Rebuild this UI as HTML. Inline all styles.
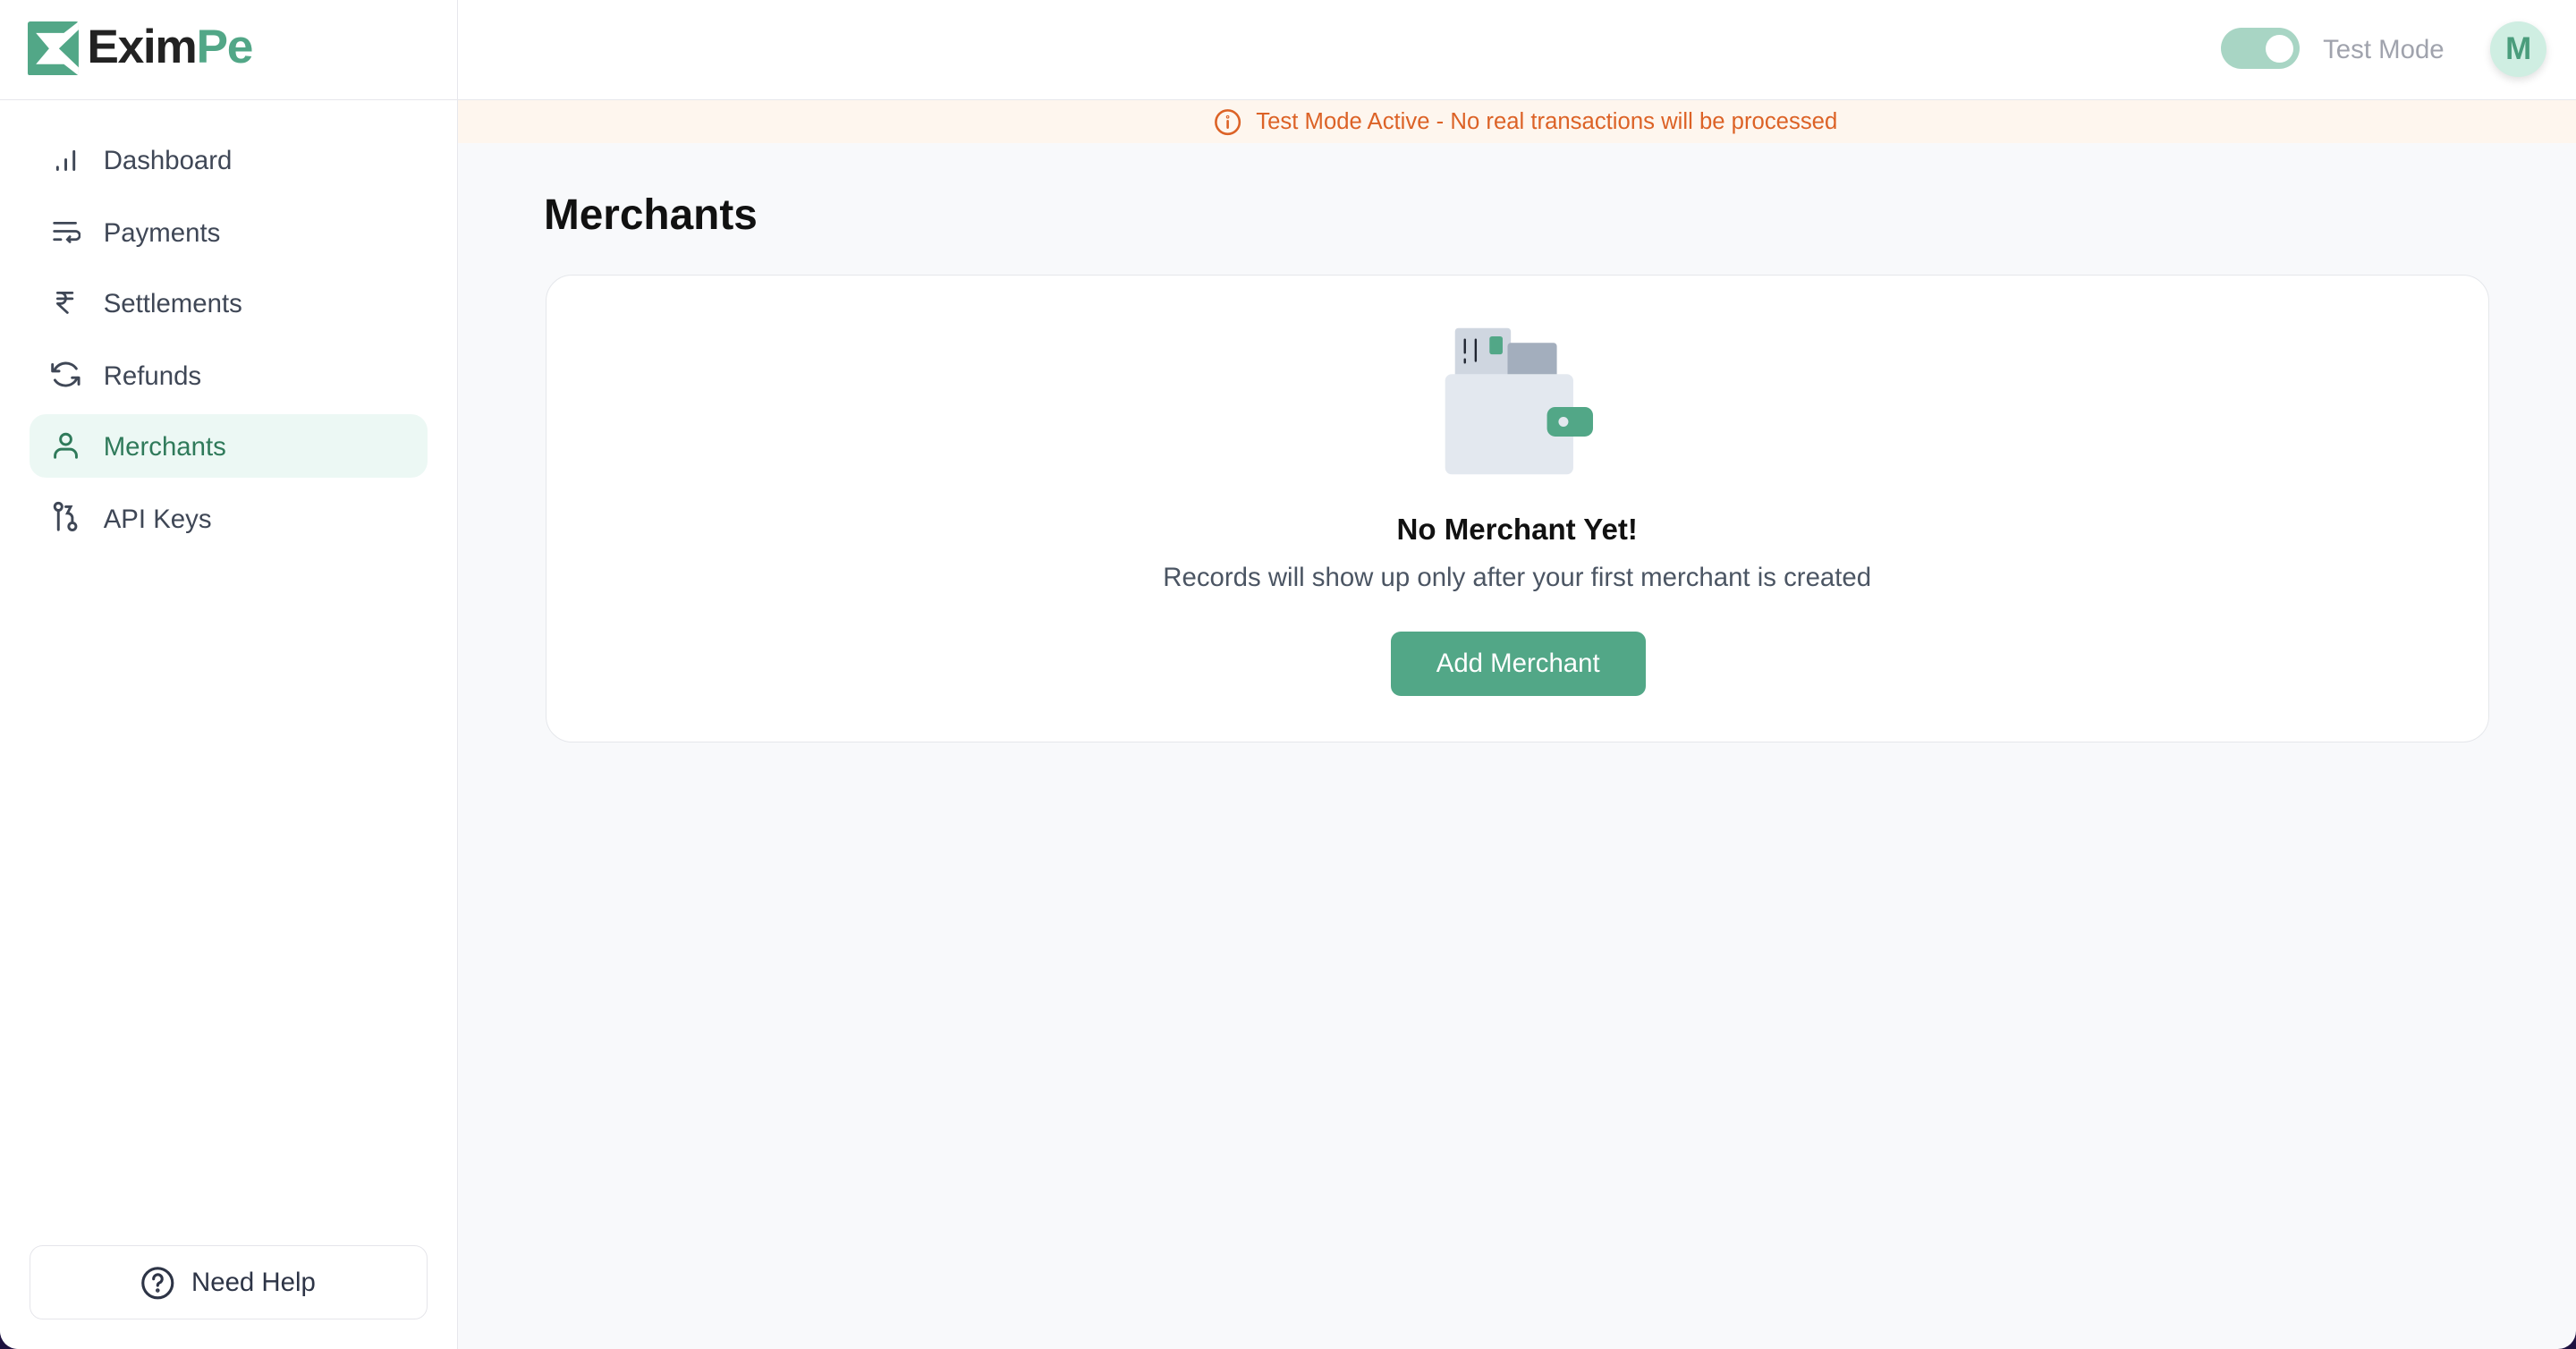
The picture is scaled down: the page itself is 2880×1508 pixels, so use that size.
<!DOCTYPE html>
<html><head><meta charset="utf-8"><style>
html{zoom:1.836735;background:#1e1240}
*{box-sizing:border-box;margin:0;padding:0}
body{width:1568px;height:821px;overflow:hidden;font-family:"Liberation Sans",sans-serif;background:#1e1240}
.app{position:absolute;left:0;top:0;width:1568px;height:821px;background:#f8f9fb;border-radius:0 0 11px 11px;overflow:hidden}
.side{position:absolute;left:0;top:0;width:279px;height:821px;background:#fff;border-right:1px solid #e7e7ec}
.logo{position:absolute;left:0;top:0;width:278px;height:61px;border-bottom:1px solid #e7e7ec}
.logo .t{position:absolute;left:53px;top:12px;font-size:29px;font-weight:bold;letter-spacing:-0.7px;color:#222}
.logo .t span{color:#52a787}
.nav{position:absolute;left:18px;width:242px;height:39px;border-radius:10px;color:#3f4756;font-size:16px}
.nav svg{position:absolute;left:13px;top:10px}
.nav .l{position:absolute;left:45px;top:11px}
.nav.a{background:#ecf8f4;color:#2f7a5a}
.help{position:absolute;left:18px;top:758px;width:242px;height:45px;border:1px solid #e5e5ea;border-radius:8px;font-size:16px;color:#2d3446}
.top{position:absolute;left:279px;top:0;right:0;height:61px;background:#fff;border-bottom:1px solid #e7e7ec}
.banner{position:absolute;left:279px;top:61px;right:0;height:26px;background:#fef6ee;color:#dc6226;font-size:14px;text-align:center}
h1{position:absolute;left:331px;top:116px;font-size:26px;font-weight:bold;color:#111}
.card{position:absolute;left:332px;top:167px;width:1183px;height:285px;background:#fff;border:1px solid #e5e7eb;border-radius:16px}
</style></head><body><div class="app">
<div class="side">
 <div class="logo">
  <svg style="position:absolute;left:17px;top:13px" width="31" height="33" viewBox="0 0 31 33"><rect width="31" height="33" rx="1.5" fill="#52a787"/><path d="M5 7H22L31 0V5L19 16.5L31 28V33L22 26H5L13 16.5Z" fill="#fff"/></svg>
  <div class="t">Exim<span>Pe</span></div>
 </div>
 <div class="nav" style="top:78px"><svg width="18" height="18" viewBox="0 0 18 18" fill="none" stroke="#3f4756" stroke-width="1.6" stroke-linecap="round"><path d="M4 15v-1.5M9 15V9M14 15V4"/></svg><span class="l">Dashboard</span></div>
 <div class="nav" style="top:122px"><svg width="18" height="18" viewBox="0 0 18 18" fill="none" stroke="#3f4756" stroke-width="1.5" stroke-linecap="round"><path d="M2 4h13M2 9h13a2.5 2.5 0 0 1 0 5H10M11.5 12.3L10 14l1.5 1.5M2 14h4"/></svg><span class="l">Payments</span></div>
 <div class="nav" style="top:165px"><svg width="18" height="18" viewBox="0 0 18 18" fill="none" stroke="#3f4756" stroke-width="1.5" stroke-linecap="round" stroke-linejoin="round"><path d="M4 3.5h9M4 7h9M6 3.5c4 0 4 6.5 0 6.5H4l6 5.5"/></svg><span class="l">Settlements</span></div>
 <div class="nav" style="top:209px"><svg width="20" height="18" viewBox="0 0 20 18" fill="none" stroke="#3f4756" stroke-width="1.6" stroke-linecap="round" stroke-linejoin="round" style="left:12px"><path d="M3 7a7.5 7 0 0 1 13.5-1.5M17 11a7.5 7 0 0 1-13.5 1.5M2 3v4h4M18 15v-4h-4"/></svg><span class="l">Refunds</span></div>
 <div class="nav a" style="top:252px"><svg width="18" height="18" viewBox="0 0 18 18" fill="none" stroke="#2f7a5a" stroke-width="1.6" stroke-linecap="round"><circle cx="9" cy="5.5" r="3.2"/><path d="M2.5 16.5v-1a4 4 0 0 1 4-4h5a4 4 0 0 1 4 4v1"/></svg><span class="l">Merchants</span></div>
 <div class="nav" style="top:296px"><svg width="20" height="20" viewBox="0 0 20 20" fill="none" stroke="#3f4756" stroke-width="1.6" stroke-linecap="round" style="top:9px"><circle cx="4.5" cy="3.5" r="2.2"/><path d="M4.5 6v11.5M9 3.5h3l-2 4a3 3 0 0 1 3 2.5v3"/><circle cx="13" cy="15.5" r="2.2"/></svg><span class="l">API Keys</span></div>
 <div class="help"><svg style="position:absolute;left:67px;top:12px" width="21" height="21" viewBox="0 0 21 21" fill="none" stroke="#2d3446" stroke-width="1.7" stroke-linecap="round"><circle cx="10.5" cy="10.5" r="9"/><path d="M8 8a2.6 2.6 0 1 1 3.5 2.4c-.7.3-1 .8-1 1.6"/><circle cx="10.5" cy="15" r=".4" fill="#2d3446"/></svg><span style="position:absolute;left:98px;top:13px">Need Help</span></div>
</div>
<div class="top">
 <div style="position:absolute;left:1073px;top:17px;width:48px;height:25px;border-radius:13px;background:#a8d5c4"><div style="position:absolute;right:4px;top:4px;width:17px;height:17px;border-radius:50%;background:#fff"></div></div>
 <div style="position:absolute;left:1135px;top:21px;font-size:16px;color:#a0a3ad">Test Mode</div>
 <div style="position:absolute;left:1237px;top:13px;width:34px;height:34px;border-radius:50%;background:#cfeee2;box-shadow:0 2px 5px rgba(0,0,0,.12);color:#4a9d7c;font-weight:bold;font-size:19px;text-align:center;line-height:34px">M</div>
</div>
<div class="banner"><span style="position:relative;top:5px;display:inline-flex;align-items:center;gap:9px;left:5px"><svg width="17" height="17" viewBox="0 0 17 17" fill="none" stroke="#dc6226" stroke-width="1.4" stroke-linecap="round"><circle cx="8.5" cy="8.5" r="7.2"/><path d="M8.5 7.8v4"/><circle cx="8.5" cy="5.3" r=".3"/></svg>Test Mode Active - No real transactions will be processed</span></div>
<h1>Merchants</h1>
<div class="card">
 <svg style="position:absolute;left:0;top:0" width="1183" height="285" viewBox="332 167 1183 285">
  <rect x="885" y="199" width="34" height="32" rx="2" fill="#cfd6e0"/>
  <rect x="917" y="208" width="30" height="22" rx="2" fill="#a3aebd"/>
  <rect x="906" y="204" width="8" height="11" rx="1.5" fill="#52a787"/>
  <path d="M891 206v8M891 218v2M897.6 206v13" stroke="#1f2430" stroke-width="1.3" stroke-linecap="round"/>
  <rect x="879" y="227" width="78" height="61" rx="4" fill="#e3e8ef"/>
  <rect x="941" y="247" width="28" height="18" rx="5" fill="#52a787"/>
  <circle cx="951" cy="256" r="3" fill="#e3e8ef"/>
 </svg>
 <div style="position:absolute;left:0;right:0;top:145px;text-align:center;font-size:18px;font-weight:bold;color:#111">No Merchant Yet!</div>
 <div style="position:absolute;left:0;right:0;top:175px;text-align:center;font-size:16px;color:#4b5563">Records will show up only after your first merchant is created</div>
 <div style="position:absolute;left:514px;top:217px;width:155px;height:39px;border-radius:6px;background:#52a787;color:#fff;font-size:16px;text-align:center;line-height:39px">Add Merchant</div>
</div>
</div></body></html>
